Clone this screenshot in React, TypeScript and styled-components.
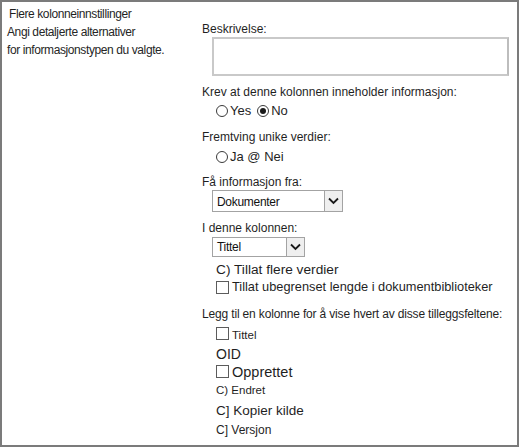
import React from "react";
import styled, { createGlobalStyle } from "styled-components";

const Global = createGlobalStyle`
  html, body { margin: 0; padding: 0; background: #fff; }
  body { font-family: "Liberation Sans", Arial, sans-serif; color: #262626; }
`;

const Frame = styled.div`
  box-sizing: border-box;
  width: 519px;
  height: 447px;
  border: 2px solid #7b7b7b;
  display: grid;
  grid-template-columns: 200px 1fr;
  background: #fff;
`;

const Side = styled.div`
  padding: 3px 0 0 5px;
  font-size: 12px;
  letter-spacing: -0.4px;
  line-height: 18px;
`;

const SideTitle = styled.div`
  padding-left: 2px;
  color: #1f1f1f;
`;

const SideText = styled.div`
  color: #262626;
`;

const Main = styled.div`
  padding-top: 19px;
  display: flex;
  flex-direction: column;
  align-items: flex-start;
`;

const Label = styled.div<{ $mt?: number; $spacing?: number }>`
  font-size: 12px;
  letter-spacing: ${(p) => p.$spacing ?? 0}px;
  line-height: 16px;
  margin-top: ${(p) => p.$mt ?? 0}px;
  color: #1f1f1f;
  white-space: nowrap;
`;

const TextArea = styled.div`
  box-sizing: border-box;
  margin-left: 10px;
  width: 297px;
  height: 39px;
  border: 2px solid #c9c9c9;
  border-right-color: #bdbdbd;
`;

const Row = styled.div<{ $mt?: number; $size?: number; $indent?: number }>`
  display: flex;
  align-items: center;
  margin-top: ${(p) => p.$mt ?? 0}px;
  margin-left: ${(p) => p.$indent ?? 14}px;
  font-size: ${(p) => p.$size ?? 13}px;
  line-height: 16px;
  height: 16px;
  white-space: nowrap;
  color: #1f1f1f;
`;

const Radio = styled.span<{ $checked?: boolean }>`
  box-sizing: border-box;
  width: 12px;
  height: 12px;
  border-radius: 50%;
  border: 1px solid #3a3a3a;
  display: inline-flex;
  align-items: center;
  justify-content: center;
  margin-right: 2px;
  &::after {
    content: "";
    width: 6px;
    height: 6px;
    border-radius: 50%;
    background: ${(p) => (p.$checked ? "#1a1a1a" : "transparent")};
  }
`;

const RadioText = styled.span<{ $gap?: number }>`
  margin-right: ${(p) => p.$gap ?? 0}px;
`;

const Check = styled.span<{ $dy?: number }>`
  box-sizing: border-box;
  width: 13px;
  height: 13px;
  border: 1px solid #5c5c5c;
  margin-right: 3px;
  position: relative;
  top: ${(p) => p.$dy ?? 0}px;
`;

const SmallText = styled.span<{ $dy?: number }>`
  position: relative;
  top: ${(p) => p.$dy ?? 0}px;
`;

const Select = styled.div<{ $w: number; $h: number; $mt?: number }>`
  box-sizing: border-box;
  margin-left: 10px;
  margin-top: ${(p) => p.$mt ?? 0}px;
  width: ${(p) => p.$w}px;
  height: ${(p) => p.$h}px;
  border: 1px solid #a3a3a3;
  display: flex;
  align-items: stretch;
  font-size: 12px;
  letter-spacing: -0.3px;
  color: #111;
`;

const SelectValue = styled.div`
  flex: 1;
  display: flex;
  align-items: flex-end;
  padding: 0 0 2px 4px;
  line-height: 14px;
`;

const SelectButton = styled.div`
  width: 17px;
  border-left: 1px solid #a3a3a3;
  background: #efefef;
  display: flex;
  align-items: center;
  justify-content: center;
`;

const Chevron = () => (
  <svg width="11" height="8" viewBox="0 0 11 8">
    <path d="M1 1.5 L5.5 6 L10 1.5" fill="none" stroke="#1a1a1a" strokeWidth="1.8" />
  </svg>
);

export default function App() {
  return (
    <>
      <Global />
      <Frame>
        <Side>
          <SideTitle>Flere kolonneinnstillinger</SideTitle>
          <SideText>Angi detaljerte alternativer</SideText>
          <SideText>for informasjonstypen du valgte.</SideText>
        </Side>
        <Main>
          <Label>Beskrivelse:</Label>
          <TextArea />
          <Label $mt={8}>Krev at denne kolonnen inneholder informasjon:</Label>
          <Row $mt={3}>
            <Radio />
            <RadioText $gap={6}>Yes</RadioText>
            <Radio $checked />
            <RadioText>No</RadioText>
          </Row>
          <Label $mt={10}>Fremtving unike verdier:</Label>
          <Row $mt={4}>
            <Radio />
            <RadioText>Ja @ Nei</RadioText>
          </Row>
          <Label $mt={9}>Få informasjon fra:</Label>
          <Select $w={131} $h={22}>
            <SelectValue>Dokumenter</SelectValue>
            <SelectButton>
              <Chevron />
            </SelectButton>
          </Select>
          <Label $mt={8}>I denne kolonnen:</Label>
          <Select $w={93} $h={20} $mt={1}>
            <SelectValue>Tittel</SelectValue>
            <SelectButton>
              <Chevron />
            </SelectButton>
          </Select>
          <Row $mt={5} $size={13.7} $indent={14}>C) Tillat flere verdier</Row>
          <Row $mt={1} $size={12.8}>
            <Check />
            Tillat ubegrenset lengde i dokumentbiblioteker
          </Row>
          <Label $mt={11} $spacing={-0.16}>Legg til en kolonne for å vise hvert av disse tilleggsfeltene:</Label>
          <Row $mt={4} $size={11.5}>
            <Check $dy={-1} />
            <SmallText $dy={1}>Tittel</SmallText>
          </Row>
          <Row $mt={4} $size={14}>OID</Row>
          <Row $mt={2} $size={14.5}>
            <Check $dy={-1} />
            Opprettet
          </Row>
          <Row $mt={2} $size={11.5}>C) Endret</Row>
          <Row $mt={5} $size={13.5}>C] Kopier kilde</Row>
          <Row $mt={3} $size={12}>C] Versjon</Row>
        </Main>
      </Frame>
    </>
  );
}
